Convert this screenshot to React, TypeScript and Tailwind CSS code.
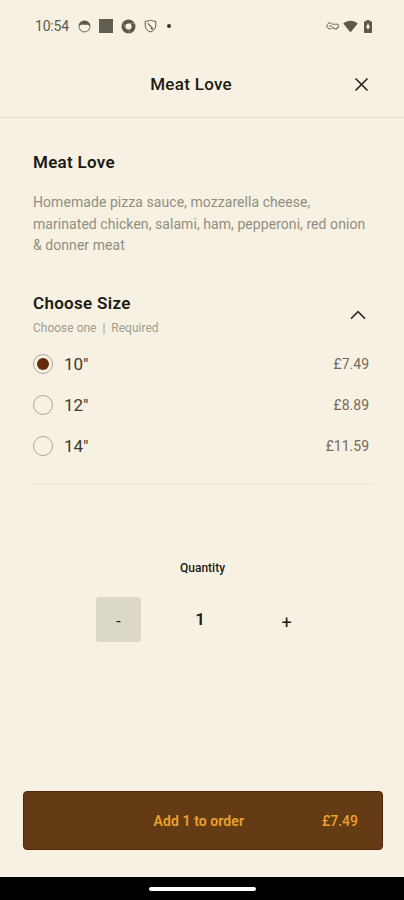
import { useState } from 'react';

const SIZES = [
  { label: '10"', price: 7.49 },
  { label: '12"', price: 8.89 },
  { label: '14"', price: 11.59 },
];

const formatPrice = (price: number) => `£${price.toFixed(2)}`;

function StatusBar() {
  return (
    <div className="flex h-[52px] shrink-0 items-center justify-between pl-[35px] pr-[32px] text-[#5a594c]">
      <div className="flex items-center">
        <span className="w-[43px] text-[14px] leading-5 tracking-[-0.2px]">10:54</span>
        <svg width="13" height="13" viewBox="0 0 13 13" fill="none">
          <circle cx="6.5" cy="6.5" r="5.4" stroke="currentColor" strokeWidth="1.1" opacity="0.7" />
          <path d="M.6 6.2C.9 2.6 3.8.7 6.5.7s5.6 1.9 5.900 5.500L9.800 4.700H3.200Z" fill="currentColor" />
        </svg>
        <span className="ml-[8px] size-[14px] bg-[#5f5e50]" />
        <svg className="ml-[8px]" width="15" height="15" viewBox="0 0 15 15" fill="none">
          <circle cx="7.5" cy="7.5" r="5" stroke="currentColor" strokeWidth="4" />
          <path d="M7.5 4.5H14M4.9 9 1.7 3.5M10.1 9 7 14.5" stroke="#aaa797" strokeWidth="0.6" />
          <circle cx="7.5" cy="7.5" r="2.8" fill="#f7f1e3" />
        </svg>
        <svg className="ml-[8px]" width="13" height="14" viewBox="0 0 13 14" fill="none" stroke="currentColor">
          <path d="M6.5 1C4.800 2 3 2.300 1.200 2.300v4C1.200 9.500 3.500 12 6.500 13c3-1 5.300-3.500 5.300-6.700v-4C10 2.300 8.200 2 6.500 1Z" />
          <path d="M3.800 4.300 9 9.800M6.800 9.800H9" strokeWidth="1.2" />
        </svg>
        <span className="ml-[10px] size-[4px] rounded-full bg-[#35342c]" />
      </div>
      <div className="flex items-center">
        <svg width="13" height="8" viewBox="0 0 13 8" fill="none" stroke="currentColor">
          <path d="M6.4 2.2A3 3 0 1 0 6.4 5.5h1.4v1.500h3.200V5.500h1.300V2.200Z" strokeWidth="0.9" />
          <path d="M3 4h3.200" strokeWidth="0.9" />
        </svg>
        <svg className="ml-[4px]" width="15" height="13" viewBox="0 0 15 13" fill="currentColor">
          <path d="M.3 3.4C4.4-.2 10.600-.2 14.700 3.400L7.500 12.400Z" />
        </svg>
        <svg className="ml-[6px]" width="8" height="13" viewBox="0 0 8 13">
          <path d="M2.500 0h3v1.300H7.300q.7 0 .7.700v10.300q0 .7-.7.700H.7Q0 13 0 12.300V2q0-.7.700-.7h1.800Z" fill="currentColor" />
          <path d="M4 3.300 5.800 6.700 4 9.800 2.200 6.700Z" fill="#f7f1e3" />
        </svg>
      </div>
    </div>
  );
}

export default function App() {
  const [selected, setSelected] = useState(0);
  const [quantity, setQuantity] = useState(1);
  const total = SIZES[selected].price * quantity;

  return (
    <div className="flex h-[900px] w-[404px] flex-col bg-[#f7f1e3] font-[Roboto,sans-serif] text-[#1c1b14]">
      <StatusBar />

      <header className="flex h-[66px] shrink-0 items-center justify-end border-b border-[#e3e0d0] pr-[35px]">
        <h1 className="mr-[122px] pb-[2px] text-[17px] leading-6 font-medium tracking-[0.3px]">Meat Love</h1>
        <button type="button" aria-label="Close">
          <svg width="15" height="15" viewBox="0 0 15 15" stroke="#25241c" strokeWidth="1.6">
            <path d="M1.5 1.5 13.5 13.5M13.5 1.5 1.5 13.5" />
          </svg>
        </button>
      </header>

      <main className="flex flex-1 flex-col pr-[32px] pl-[33px]">
        <h2 className="mt-[32px] text-[17px] leading-6 font-semibold tracking-[0.3px]">Meat Love</h2>
        <p className="mt-[18px] text-[14px] leading-[21.6px] tracking-[0.06px] whitespace-nowrap text-[#918e80]">
          Homemade pizza sauce, mozzarella cheese,
          <br />
          marinated chicken, salami, ham, pepperoni, red onion
          <br />
          &amp; donner meat
        </p>

        <section className="mt-[34.2px] border-b-2 border-[#eeebdc] pb-[16px]">
          <div className="flex items-center justify-between pr-[6px]">
            <div>
              <h3 className="text-[17px] leading-6 font-semibold tracking-[0.3px]">Choose Size</h3>
              <p className="mt-[4px] text-[12px] leading-[18px] whitespace-pre text-[#a09d8e]">
                Choose one{'  |  '}Required
              </p>
            </div>
            <svg className="mt-[2px]" width="16" height="10" viewBox="0 0 16 10" fill="none" stroke="#33322a" strokeWidth="1.7">
              <path d="M1 8.7 8 1.7 15 8.7" />
            </svg>
          </div>

          <div className="mt-[7px]">
            {SIZES.map((size, index) => (
              <label key={size.label} className="flex h-[41px] items-center">
                <input
                  type="radio"
                  name="size"
                  className="sr-only"
                  checked={selected === index}
                  onChange={() => setSelected(index)}
                />
                <span className="flex size-[20px] items-center justify-center rounded-full border border-[#aaa798]">
                  {selected === index && <span className="size-[12px] rounded-full bg-[#642b0c]" />}
                </span>
                <span className="ml-[11px] pt-px text-[17px] text-[#3c3b31]">{size.label}</span>
                <span className="mr-[3px] ml-auto pt-px text-[14px] text-[#77685a]">{formatPrice(size.price)}</span>
              </label>
            ))}
          </div>
        </section>

        <section className="mt-[73px] flex flex-col">
          <h4 className="ml-[147px] text-[12px] leading-5 font-medium">Quantity</h4>
          <div className="mt-[19.4px] ml-[63px] flex h-[45px] items-center">
            <button
              type="button"
              className="size-[45px] rounded-[3px] bg-[#dbd8c8] pt-[5px] text-[16px]"
              onClick={() => setQuantity(Math.max(1, quantity - 1))}
            >
              -
            </button>
            <span className="w-[118px] pb-[2px] text-center text-[17px] leading-[24px] font-semibold">{quantity}</span>
            <button
              type="button"
              className="ml-[5px] size-[45px] pt-[5px] text-[18px]"
              onClick={() => setQuantity(quantity + 1)}
            >
              +
            </button>
          </div>
        </section>
      </main>

      <button
        type="button"
        className="mr-[21px] mb-[27px] ml-[23px] flex h-[59px] shrink-0 items-center justify-end rounded-[4px] border border-[#552409] bg-[#633c15] pt-[2px] pr-[24px] text-[#eea02c]"
      >
        <span className="mr-[78px] text-[14px] font-semibold tracking-[0.08px]">Add {quantity} to order</span>
        <span className="text-[14px] font-medium">{formatPrice(total)}</span>
      </button>

      <div className="flex h-[23px] shrink-0 items-center justify-center bg-black">
        <span className="h-[4px] w-[107px] rounded-full bg-white" />
      </div>
    </div>
  );
}
